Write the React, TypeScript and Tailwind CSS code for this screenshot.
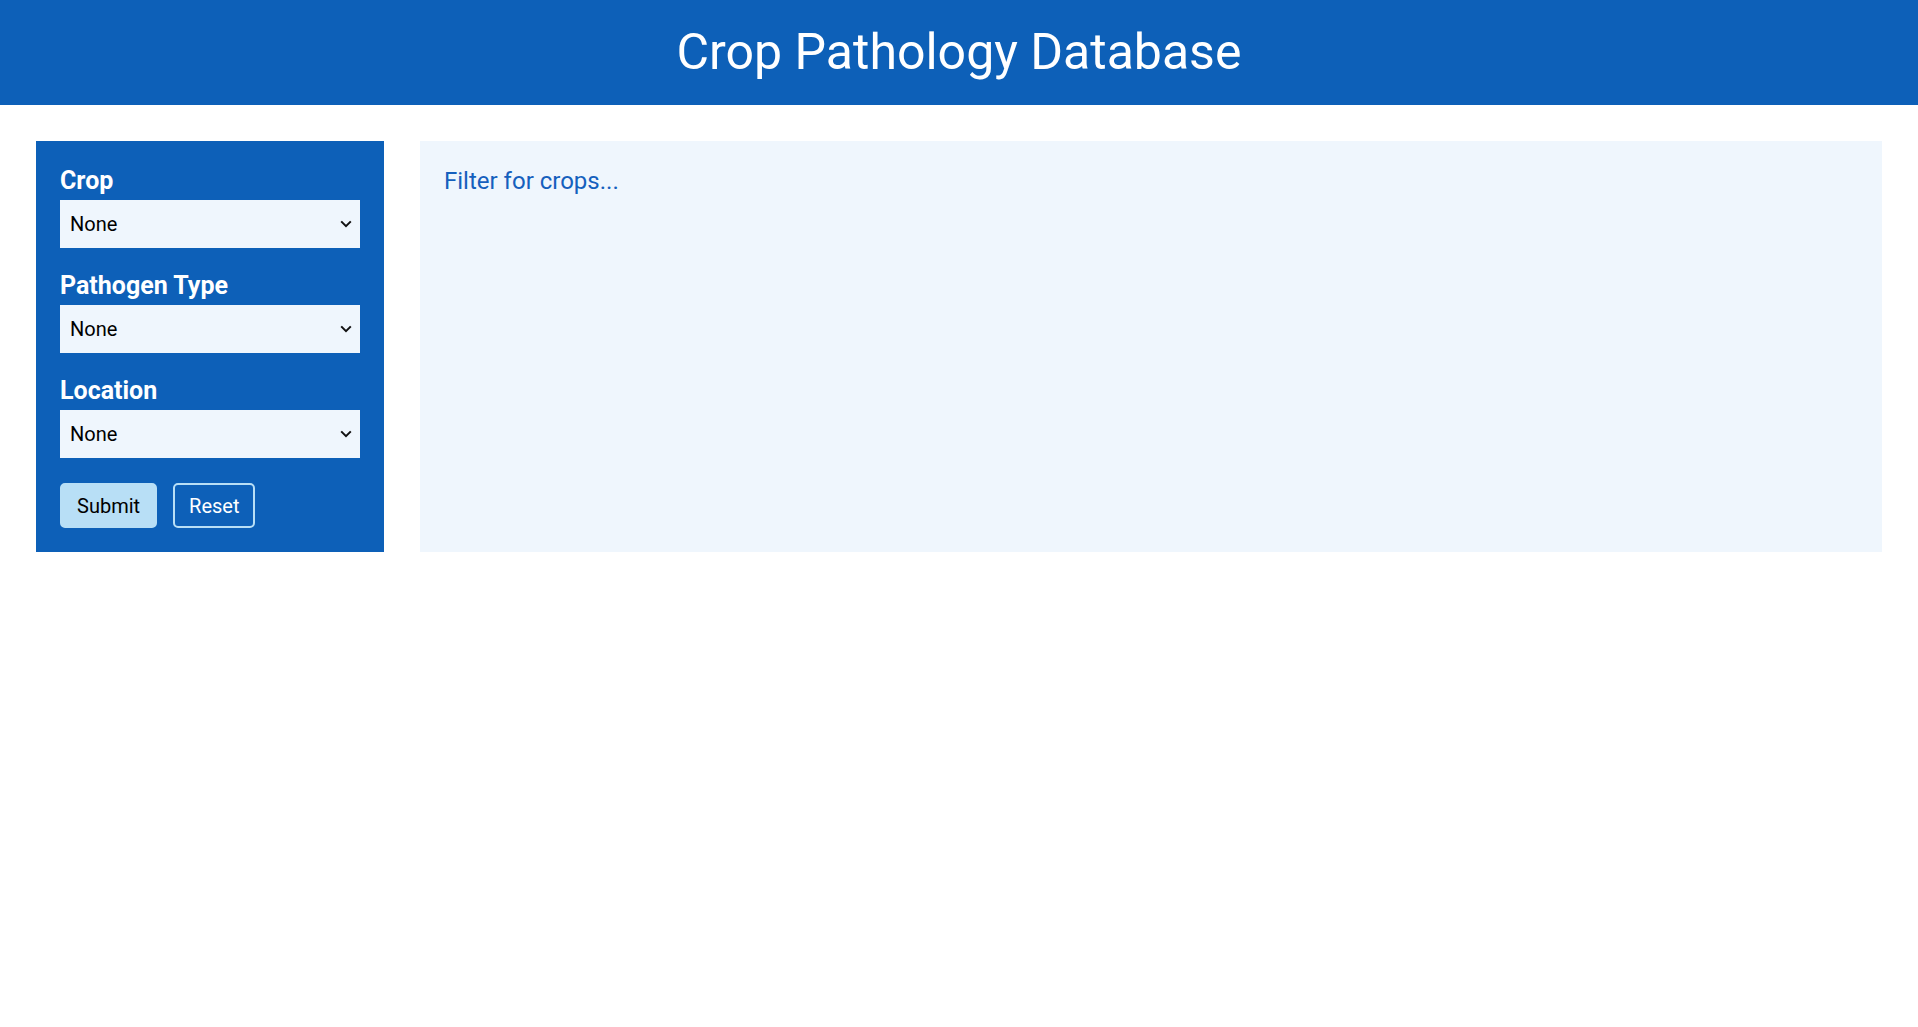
const filters = [
  { id: "crop", label: "Crop" },
  { id: "pathogen", label: "Pathogen Type" },
  { id: "location", label: "Location" },
];

function FilterSelect({ id, label }: { id: string; label: string }) {
  return (
    <div className="flex flex-col mb-[22px]">
      <label htmlFor={id} className="text-[25px] leading-8 font-bold text-white">
        {label}
      </label>
      <div className="relative mt-[3px]">
        <select
          id={id}
          defaultValue="none"
          className="w-full h-12 appearance-none bg-[#eff6fd] text-black text-xl pl-[10px] pr-8 outline-none rounded-none"
        >
          <option value="none">None</option>
        </select>
        <svg
          className="absolute right-2 top-1/2 -translate-y-1/2 pointer-events-none"
          width="12"
          height="8"
          viewBox="0 0 12 8"
          fill="none"
        >
          <path d="M1.2 1.4 6 6.2l4.8-4.8" stroke="#111" strokeWidth="2" />
        </svg>
      </div>
    </div>
  );
}

export default function App() {
  return (
    <div className="min-h-screen bg-white font-['Roboto',sans-serif]">
      <header className="h-[105px] bg-[#0d60b8] flex items-center justify-center">
        <h1 className="text-[50px] leading-none text-white font-normal -mt-[2px]">Crop Pathology Database</h1>
      </header>

      <main className="flex gap-9 p-9">
        <aside className="w-[348px] shrink-0 bg-[#0d60b8] p-6">
          <form className="flex flex-col" onSubmit={(e) => e.preventDefault()}>
            {filters.map((f) => (
              <FilterSelect key={f.id} id={f.id} label={f.label} />
            ))}
            <div className="flex gap-4 mt-[3px]">
              <button
                type="submit"
                className="h-[45px] px-[15px] border-2 border-[#b8dff6] bg-[#b8dff6] text-black text-xl rounded-[5px]"
              >
                Submit
              </button>
              <button
                type="reset"
                className="h-[45px] px-[14px] border-2 border-[#b8dff6] bg-transparent text-white text-xl rounded-[5px]"
              >
                Reset
              </button>
            </div>
          </form>
        </aside>

        <section className="flex-1 bg-[#eff6fd] p-6">
          <p className="text-2xl leading-8 text-[#1560bd]">Filter for crops...</p>
        </section>
      </main>
    </div>
  );
}
